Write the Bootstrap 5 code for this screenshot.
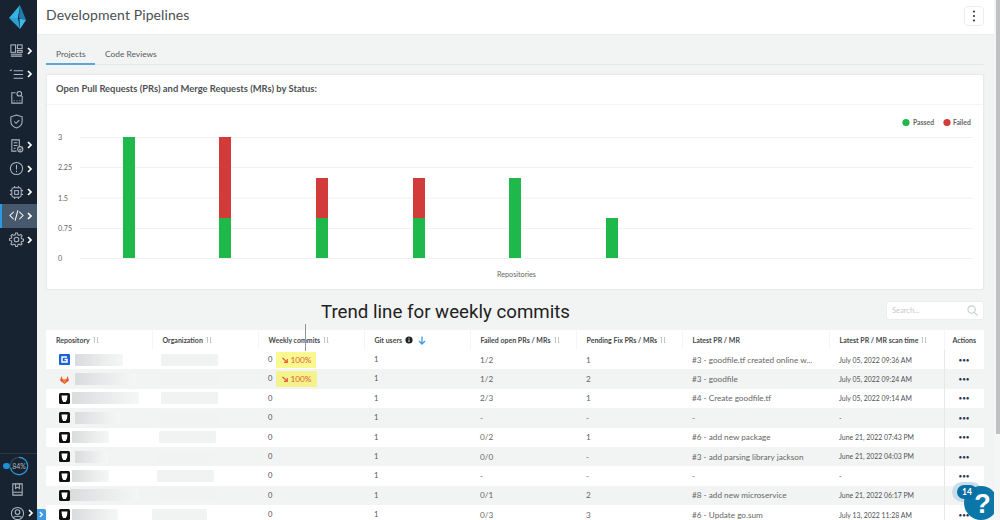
<!DOCTYPE html>
<html lang="en"><head><meta charset="utf-8"><title>Development Pipelines</title>
<link href="https://cdn.jsdelivr.net/npm/bootstrap@5.3.0/dist/css/bootstrap.min.css" rel="stylesheet">
<style>
html,body{height:520px;overflow:hidden}
body{font-family:Lato,"Liberation Sans",sans-serif;background:#f2f4f4;color:#555;position:relative}
.app{height:520px}
.side{width:37px;flex:none;background:#172331;position:relative}
.side-logo{height:39px;flex:none}
.side-item{height:23.6px;padding-left:9px;gap:3px;flex:none}
.side-item svg.ic{width:15px;height:15px;flex:none;fill:none;stroke:#aeb7c0;stroke-width:1.1}
.side-item svg.ch{width:6px;height:8px;flex:none;fill:none;stroke:#fff;stroke-width:1.7}
.side-item.on{background:#47596c;border-left:2px solid #2a9be0;padding-left:7px}
.side-rule{border-top:1px solid #2a3947;flex:none}
.side-bot{height:66px;flex:none}
.gauge{height:24px;padding-left:3px;flex:none}
.gauge-dot{width:7px;height:6px;background:#1f8fd8;border-radius:3px;margin-right:-1px}
.gauge-txt{font-size:7px;fill:#aeb7bf}
.main{min-width:0;flex:1}
.main>*{flex-shrink:0}
.topbar{height:35px;background:#fff;padding:0 11px 3px 9px;width:958px;border-bottom:1px solid #eceeee}
.topbar h1{font-size:14px;font-weight:400;color:#4b4f52;margin:0;letter-spacing:.1px}
.kebab{width:20px;height:20px;padding:0;background:#fff;border:1px solid #ebeded;border-radius:4px;line-height:1}
.tabs-row{margin:0 16px 0 9px;height:30px;border-bottom:1px solid #e6e8e8}
.tabs-row .nav-link{font-size:8.4px;color:#55595c;padding:0 10px;height:30px;line-height:39px;border:0;border-bottom:2px solid transparent;margin:0;background:none}
.tabs-row .nav-link.active{border-bottom-color:#5ba5dc;color:#55595c;background:none;width:49px}
.tabs-row .nav-link+.nav-link{padding-left:9px}
.chart-card{margin:9px 16px 0 9px;height:216px;border:1px solid #e9ebeb;border-radius:2px;box-shadow:0 0 2px rgba(0,0,0,.05)}
.chart-head{height:30px;padding:0 9px;font-size:9.4px;font-weight:700;color:#4d5153;border-bottom:1px solid #f3f4f4}
.chart-svg{display:block}
.chart-svg text{font-family:Lato,"Liberation Sans",sans-serif;font-size:7.2px;fill:#666}
.chart-svg .lg{font-size:6.8px;font-weight:700}
.anno-row{height:40px;margin:0 16px 0 9px;padding-top:11px}
.anno{font-family:Roboto,"Liberation Sans",sans-serif;font-size:18.7px;line-height:22px;color:#222;margin-left:275px}
.search-box{width:98px;flex:none;height:19px;background:#fff;border:1px solid #eceeee;border-radius:3px;padding:0 5px}
.search-box input{border:0;padding:0;font-size:7.5px;height:16px;min-width:0;background:none;box-shadow:none}
.search-box input::placeholder{color:#c6cacc}
.search-box svg{width:11px;height:11px;fill:none;stroke:#c9cdcf;stroke-width:1.2;flex:none}
.tbl-wrap{margin:0 16px 0 9px;position:relative}
.trend-line{position:absolute;left:259px;top:-6px;width:1px;height:27px;background:#8e9498;z-index:3}
.tbl{table-layout:fixed;width:938px;margin:0;--bs-table-bg:transparent;border-collapse:collapse}
.tbl th,.tbl td{height:19.4px;padding:0 0 0 10px;border:0;vertical-align:middle;white-space:nowrap;box-shadow:none;overflow:hidden;color:#555}
.tbl th{font-size:7px;font-weight:700;color:#44484b;background:#fff;border-right:1px solid #f4f5f5;height:20px}
.tbl td{font-size:7.6px;background:#fff}
.tbl tr:nth-child(even) td{background:#f2f4f4}
.tbl td.big{font-size:8.2px;color:#666}
.tbl td.dt{font-size:6.9px;color:#4e5254}
.tbl .act{border-left:1px solid #e6e8e8;border-right:0;text-align:center;padding:0;box-shadow:-2px 0 3px rgba(0,0,0,.03)}
.tbl td.act{font-size:5.5px;line-height:10px;font-weight:700;color:#2c3448;letter-spacing:.4px}
.srt{width:6px;height:8px;margin-left:3px;vertical-align:-1px;fill:none;stroke:#b5b9bc;stroke-width:.8}
.ic-i{width:8px;height:8px;margin:0 2px 0 3px;vertical-align:-1px}
.ic-d{width:8px;height:9px;margin-left:3px;vertical-align:-2px;fill:none;stroke:#3f9ae0;stroke-width:1.3}
.cellrow{gap:5px}
.rp{width:11px;height:11px;flex:none;margin-left:3px}
.blur{height:12px;flex:none;border-radius:1px;filter:blur(.5px)}
.blur-r{background:linear-gradient(90deg,#d9dbdd,#eef0f0 70%,#f5f6f6)}
.blur-o{background:#f1f2f2;margin-left:-1px;width:57px}
.w37{width:37px}.w33{width:33px}.w45{width:45px}.w46{width:46px}.w48{width:48px}.w61{width:61px}.w67{width:67px}.w69{width:69px}
.ml-s{margin-left:-5px}.ml-t{margin-left:-12px}.ml-u{margin-left:-3px}
.trend{display:inline-flex;align-items:center;gap:2px;background:#fbf88f;color:#e2603b;font-size:8.2px;line-height:16px;height:16px;padding:0 5px 0 6px;margin-left:4px;vertical-align:middle}
.trend svg{width:6px;height:6px;fill:none;stroke:#e2603b;stroke-width:1.2}
.trend.lng{padding-right:6px;background:#f4f28a}
.z{font-size:8.6px;color:#555}
.collapse-tab{position:absolute;left:37px;bottom:0;width:9px;height:11px;background:#3f9ae0;z-index:4;border-radius:0 2px 0 0}
.collapse-tab svg{display:block;width:5px;height:7px;margin:2px auto;fill:none;stroke:#fff;stroke-width:1.5}
.help{position:absolute;left:964px;top:486px;width:34px;height:34px;border-radius:50%;background:#0b77a8;color:#fff;font:700 27px/36px "Liberation Sans",sans-serif;text-align:center;z-index:6;padding-left:3px}
.help-halo{position:absolute;left:952px;top:482px;width:30px;height:20px;border-radius:10px;background:#c8dde9;z-index:5}
.help-num{position:absolute;left:957px;top:485px;width:20px;height:14px;border-radius:7px;background:#0b6fa3;color:#fff;font-size:8.5px;font-weight:700;line-height:14px;text-align:center;z-index:7}
.sbar{position:absolute;right:0;top:0;width:6px;height:520px;background:#f4f5f5;z-index:8}
.sbar-thumb{margin-left:2px;width:4px;height:434px;background:#bfc1c2}
</style></head>
<body>
<div class="app d-flex">
<aside class="side d-flex flex-column">
 <div class="side-logo d-flex align-items-start">
  <svg width="37" height="32" viewBox="0 0 37 32"><polygon points="20,5 9,18 18,18" fill="#38b2e3"/><polygon points="9,18 20,29 18,18" fill="#2ba0d4"/><polygon points="20,5 26,20 19,18" fill="#1d7fb0"/><polygon points="20,29 26,20 19.5,18.5" fill="#3fb9e8"/></svg>
 </div>
 <div class="side-item d-flex align-items-center"><svg class="ic" viewBox="0 0 16 16"><rect x="2" y="2" width="5" height="8"/><rect x="9" y="2" width="5" height="4"/><rect x="9" y="8" width="5" height="2"/><path d="M2 12h12M2 14h12"/></svg><svg class="ch" viewBox="0 0 6 8"><path d="M1 1l3 3-3 3"/></svg></div>
 <div class="side-item d-flex align-items-center"><svg class="ic" viewBox="0 0 16 16"><path d="M5 4h10M5 8h10M5 12h10M1 4l2-1"/></svg><svg class="ch" viewBox="0 0 6 8"><path d="M1 1l3 3-3 3"/></svg></div>
 <div class="side-item d-flex align-items-center"><svg class="ic" viewBox="0 0 16 16"><path d="M7 3H3v11h11V8M5 11.500h1M8 11.500h1M11 11.500h1"/><circle cx="11" cy="4" r="2.500"/><path d="M13 6l2 2"/></svg></div>
 <div class="side-item d-flex align-items-center"><svg class="ic" viewBox="0 0 16 16"><path d="M8 1l6 2v5c0 3.500-3 6-6 7-3-1-6-3.500-6-7V3z"/><path d="M5.500 8l2 2 3.500-3.500"/></svg></div>
 <div class="side-item d-flex align-items-center"><svg class="ic" viewBox="0 0 16 16"><path d="M8 14H3V2h8v7M5 5h4M5 8h4M5 11h2"/><circle cx="12" cy="12" r="2.800"/><path d="M10.800 12l1 1 1.500-1.800"/></svg><svg class="ch" viewBox="0 0 6 8"><path d="M1 1l3 3-3 3"/></svg></div>
 <div class="side-item d-flex align-items-center"><svg class="ic" viewBox="0 0 16 16"><circle cx="8" cy="8" r="6.500"/><path d="M8 4v5M8 10.500v1.500"/></svg><svg class="ch" viewBox="0 0 6 8"><path d="M1 1l3 3-3 3"/></svg></div>
 <div class="side-item d-flex align-items-center"><svg class="ic" viewBox="0 0 16 16"><rect x="3" y="3" width="10" height="10" rx="2"/><rect x="6" y="6" width="4" height="4"/><path d="M6 1v2M10 1v2M6 13v2M10 13v2M1 6h2M1 10h2M13 6h2M13 10h2"/></svg><svg class="ch" viewBox="0 0 6 8"><path d="M1 1l3 3-3 3"/></svg></div>
 <div class="side-item on d-flex align-items-center"><svg class="ic" viewBox="0 0 16 16" style="stroke:#fff"><path d="M5 4L1 8l4 4M11 4l4 4-4 4M9.500 2.500l-3 11"/></svg><svg class="ch" viewBox="0 0 6 8"><path d="M1 1l3 3-3 3"/></svg></div>
 <div class="side-item d-flex align-items-center"><svg class="ic" viewBox="0 0 16 16"><circle cx="8" cy="8" r="2.500"/><path d="M7 1h2l.4 2 1.500.6L12.600 2.500 14 4l-1.100 1.700.6 1.500 2 .4v2l-2 .4-.6 1.500L14 12.600 12.600 14l-1.700-1.100-1.500.6-.4 2H7l-.4-2-1.500-.6L3.400 14 2 12.600l1.100-1.700-.6-1.500-2-.4V7l2-.4.6-1.500L2 4l1.400-1.500 1.700 1.100 1.500-.6z"/></svg><svg class="ch" viewBox="0 0 6 8"><path d="M1 1l3 3-3 3"/></svg></div>
 <div class="flex-grow-1"></div>
 <div class="side-rule"></div>
 <div class="side-bot d-flex flex-column">
  <div class="gauge d-flex align-items-center"><span class="gauge-dot"></span><svg width="20" height="20" viewBox="0 0 20 20"><circle cx="10" cy="10" r="8.700" fill="none" stroke="#33475a" stroke-width="1.200"/><path d="M10 1.300a8.700 8.700 0 1 1-8.500 10.500" fill="none" stroke="#2a9be0" stroke-width="1.200"/><text x="10" y="12.500" text-anchor="middle" class="gauge-txt">84%</text></svg></div>
  <div class="side-item d-flex align-items-center"><svg class="ic" viewBox="0 0 16 16" style="margin-left:1px"><path d="M3 2h10v12H3zM3 11h10M6 2v5l2-1.500L10 7V2"/></svg></div>
  <div class="side-item d-flex align-items-center"><svg class="ic" viewBox="0 0 16 16" style="margin-left:1px"><circle cx="8" cy="8" r="6.500"/><circle cx="8" cy="6.500" r="2.500"/><path d="M3.500 12.500c1-2 8-2 9 0"/></svg><svg class="ch" viewBox="0 0 6 8"><path d="M1 1l3 3-3 3"/></svg></div>
 </div>
</aside>
<a class="collapse-tab" href="#"><svg viewBox="0 0 6 8"><path d="M1 1l3 3-3 3"/></svg></a>
<main class="main d-flex flex-column">
 <div class="topbar d-flex align-items-center justify-content-between">
  <h1>Development Pipelines</h1>
  <button class="kebab btn d-flex align-items-center justify-content-center" aria-label="More"><svg width="4" height="12" viewBox="0 0 4 12"><circle cx="2" cy="1.500" r="1.100" fill="#2f3650"/><circle cx="2" cy="6" r="1.100" fill="#2f3650"/><circle cx="2" cy="10.500" r="1.100" fill="#2f3650"/></svg></button>
 </div>
 <div class="tabs-row"><ul class="nav"><li class="nav-item"><a class="nav-link active" href="#">Projects</a></li><li class="nav-item"><a class="nav-link" href="#">Code Reviews</a></li></ul></div>
 <div class="card chart-card">
  <div class="chart-head d-flex align-items-center">Open Pull Requests (PRs) and Merge Requests (MRs) by Status:</div>
  <svg class="chart-svg" width="936" height="184" viewBox="46 105 936 184">
   <g stroke="#f1f2f3" stroke-width="1"><path d="M79 137.500H972M79 167.500H972M79 198H972M79 228.500H972M79 258.500H972"/></g>
   <g><text x="57" y="140">3</text><text x="57" y="170">2.25</text><text x="57" y="201">1.5</text><text x="57" y="231">0.75</text><text x="57" y="261">0</text></g>
   <g fill="#1fb84b"><rect x="122" y="137" width="12" height="121"/><rect x="218" y="218" width="12" height="40"/><rect x="315" y="218" width="12" height="40"/><rect x="412" y="218" width="12" height="40"/><rect x="508" y="178" width="12" height="80"/><rect x="605" y="218" width="12" height="40"/></g>
   <g fill="#d33b3b"><rect x="218" y="137" width="12" height="81"/><rect x="315" y="178" width="12" height="40"/><rect x="412" y="178" width="12" height="40"/></g>
   <circle cx="905" cy="122.500" r="3.600" fill="#1fb84b"/><text class="lg" x="912" y="125">Passed</text>
   <circle cx="946" cy="122.500" r="3.600" fill="#d33b3b"/><text class="lg" x="952" y="125">Failed</text>
   <text x="496" y="277">Repositories</text>
  </svg>
 </div>
 <div class="anno-row d-flex align-items-start justify-content-between">
  <span class="anno">Trend line for weekly commits</span>
  <div class="search-box d-flex align-items-center"><input class="form-control" placeholder="Search..." aria-label="Search"><svg viewBox="0 0 12 12"><circle cx="5" cy="5" r="4"/><path d="M8 8l3.500 3.500"/></svg></div>
 </div>
 <div class="tbl-wrap">
  <span class="trend-line"></span>
  <table class="table tbl">
   <colgroup><col style="width:106px"><col style="width:106px"><col style="width:106px"><col style="width:106px"><col style="width:106px"><col style="width:106px"><col style="width:147px"><col style="width:115px"><col style="width:40px"></colgroup>
   <thead><tr>
    <th>Repository<svg class="srt" viewBox="0 0 6 8"><path d="M1.500 7V1M1.500 1L.5 2M4.500 1v6M4.500 7l1-1"/></svg></th>
    <th>Organization<svg class="srt" viewBox="0 0 6 8"><path d="M1.500 7V1M1.500 1L.5 2M4.500 1v6M4.500 7l1-1"/></svg></th>
    <th>Weekly commits<svg class="srt" viewBox="0 0 6 8"><path d="M1.500 7V1M1.500 1L.5 2M4.500 1v6M4.500 7l1-1"/></svg></th>
    <th>Git users<svg class="ic-i" viewBox="0 0 8 8"><circle cx="4" cy="4" r="3.600" fill="#222"/><path d="M4 3.500v2.500M4 1.800v.9" stroke="#fff" stroke-width=".9"/></svg><svg class="ic-d" viewBox="0 0 8 9"><path d="M4 .5v7M1 5l3 3 3-3"/></svg></th>
    <th>Failed open PRs / MRs<svg class="srt" viewBox="0 0 6 8"><path d="M1.500 7V1M1.500 1L.5 2M4.500 1v6M4.500 7l1-1"/></svg></th>
    <th>Pending Fix PRs / MRs<svg class="srt" viewBox="0 0 6 8"><path d="M1.500 7V1M1.500 1L.5 2M4.500 1v6M4.500 7l1-1"/></svg></th>
    <th>Latest PR / MR</th>
    <th>Latest PR / MR scan time<svg class="srt" viewBox="0 0 6 8"><path d="M1.500 7V1M1.500 1L.5 2M4.500 1v6M4.500 7l1-1"/></svg></th>
    <th class="act">Actions</th>
   </tr></thead>
   <tbody>
    <tr><td><div class="d-flex align-items-center cellrow"><svg class="rp" viewBox="0 0 11 11"><rect width="11" height="11" rx="1" fill="#1a62d6"/><path d="M8 3H3v5h5V5.500H5.500" fill="none" stroke="#fff" stroke-width="1.500"/></svg><span class="blur blur-r w48"></span></div></td><td><div class="blur blur-o"></div></td><td class="z">0<span class="trend"><svg viewBox="0 0 6 6"><path d="M.5 1l4.500 4M5.300 2v3.300H2"/></svg>100%</span></td><td>1</td><td class="big">1/2</td><td class="big">1</td><td class="big">#3 - goodfile.tf created online w...</td><td class="dt">July 05, 2022 09:36 AM</td><td class="act">•••</td></tr>
    <tr><td><div class="d-flex align-items-center cellrow"><svg class="rp" viewBox="0 0 11 11"><path d="M5.500 10L1 6.500 2.300 2l1.500 3.500h3.400L8.700 2 10 6.500z" fill="#e8562f"/><path d="M5.500 10L3.800 5.500h3.400z" fill="#f58b2c"/></svg><span class="blur blur-r w61"></span></div></td><td><div class="blur blur-o"></div></td><td class="z">0<span class="trend lng"><svg viewBox="0 0 6 6"><path d="M.5 1l4.500 4M5.300 2v3.300H2"/></svg>100%</span></td><td>1</td><td class="big">1/2</td><td class="big">2</td><td class="big">#3 - goodfile</td><td class="dt">July 05, 2022 09:24 AM</td><td class="act">•••</td></tr>
    <tr><td><div class="d-flex align-items-center cellrow"><svg class="rp" viewBox="0 0 11 11"><rect width="11" height="11" rx="1.500" fill="#111"/><path d="M2.500 2.500h6L8 6.500 6.800 9H4.200L3 6.500z" fill="#fff"/></svg><span class="blur blur-r w67 ml-u"></span></div></td><td><div class="blur blur-o"></div></td><td>0</td><td>1</td><td class="big">2/3</td><td class="big">1</td><td class="big">#4 - Create goodfile.tf</td><td class="dt">July 05, 2022 09:14 AM</td><td class="act">•••</td></tr>
    <tr><td><div class="d-flex align-items-center cellrow"><svg class="rp" viewBox="0 0 11 11"><rect width="11" height="11" rx="1.500" fill="#111"/><path d="M2.500 2.500h6L8 6.500 6.800 9H4.200L3 6.500z" fill="#fff"/></svg><span class="blur blur-r w45"></span></div></td><td><div class="blur blur-o"></div></td><td>0</td><td>1</td><td class="big">-</td><td class="big">-</td><td class="big">-</td><td class="dt">-</td><td class="act">•••</td></tr>
    <tr><td><div class="d-flex align-items-center cellrow"><svg class="rp" viewBox="0 0 11 11"><rect width="11" height="11" rx="1.500" fill="#111"/><path d="M2.500 2.500h6L8 6.500 6.800 9H4.200L3 6.500z" fill="#fff"/></svg><span class="blur blur-r w37 ml-u"></span></div></td><td><div class="blur blur-o ml-u"></div></td><td>0</td><td>1</td><td class="big">0/2</td><td class="big">1</td><td class="big">#6 - add new package</td><td class="dt">June 21, 2022 07:43 PM</td><td class="act">•••</td></tr>
    <tr><td><div class="d-flex align-items-center cellrow"><svg class="rp" viewBox="0 0 11 11"><rect width="11" height="11" rx="1.500" fill="#111"/><path d="M2.500 2.500h6L8 6.500 6.800 9H4.200L3 6.500z" fill="#fff"/></svg><span class="blur blur-r w33"></span></div></td><td><div class="blur blur-o ml-s"></div></td><td>0</td><td>1</td><td class="big">0/0</td><td class="big">-</td><td class="big">#3 - add parsing library jackson</td><td class="dt">June 21, 2022 04:03 PM</td><td class="act">•••</td></tr>
    <tr><td><div class="d-flex align-items-center cellrow"><svg class="rp" viewBox="0 0 11 11"><rect width="11" height="11" rx="1.500" fill="#111"/><path d="M2.500 2.500h6L8 6.500 6.800 9H4.200L3 6.500z" fill="#fff"/></svg><span class="blur blur-r w37 ml-u"></span></div></td><td><div class="blur blur-o ml-s"></div></td><td>0</td><td>1</td><td class="big">-</td><td class="big">-</td><td class="big">-</td><td class="dt">-</td><td class="act">•••</td></tr>
    <tr><td><div class="d-flex align-items-center cellrow"><svg class="rp" viewBox="0 0 11 11"><rect width="11" height="11" rx="1.500" fill="#111"/><path d="M2.500 2.500h6L8 6.500 6.800 9H4.200L3 6.500z" fill="#fff"/></svg><span class="blur blur-r w69 ml-s"></span></div></td><td><div class="blur blur-o ml-u"></div></td><td>0</td><td>1</td><td class="big">0/1</td><td class="big">2</td><td class="big">#8 - add new microservice</td><td class="dt">June 21, 2022 06:17 PM</td><td class="act">•••</td></tr>
    <tr><td><div class="d-flex align-items-center cellrow"><svg class="rp" viewBox="0 0 11 11"><rect width="11" height="11" rx="1.500" fill="#111"/><path d="M2.500 2.500h6L8 6.500 6.800 9H4.200L3 6.500z" fill="#fff"/></svg><span class="blur blur-r w46 ml-u"></span></div></td><td><div class="blur blur-o ml-t"></div></td><td>0</td><td>1</td><td class="big">0/3</td><td class="big">3</td><td class="big">#6 - Update go.sum</td><td class="dt">July 13, 2022 11:28 AM</td><td class="act">•••</td></tr>
   </tbody>
  </table>
 </div>
</main>
</div>
<div class="help-halo"></div>
<div class="help">?</div>
<div class="help-num">14</div>
<div class="sbar"><div class="sbar-thumb"></div></div>
</body></html>
